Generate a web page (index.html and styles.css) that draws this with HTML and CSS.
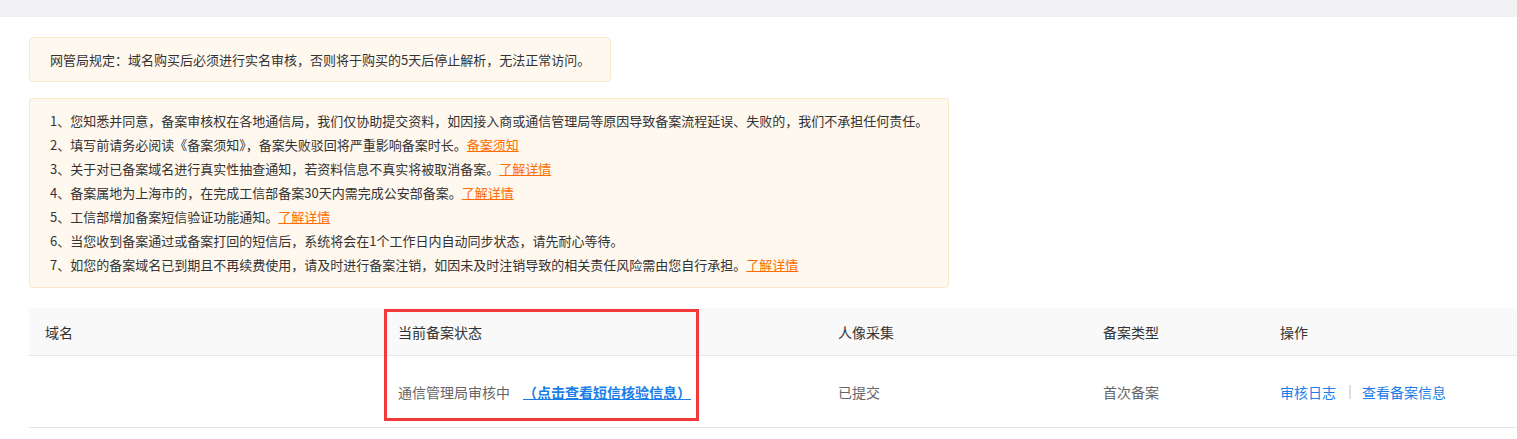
FILE: index.html
```html
<!DOCTYPE html>
<html lang="zh-CN">
<head>
  <meta charset="UTF-8" />
  <meta name="viewport" content="width=device-width, initial-scale=1.0"/>
  <title>备案管理</title>
  <link rel="stylesheet" href="styles.css">
</head>
<body>
  <div class="top-bar"></div>

  <div class="page">
    <div class="notice notice-rule">网管局规定：域名购买后必须进行实名审核，否则将于购买的5天后停止解析，无法正常访问。</div>

    <div class="notice notice-list">
      <p>1、您知悉并同意，备案审核权在各地通信局，我们仅协助提交资料，如因接入商或通信管理局等原因导致备案流程延误、失败的，我们不承担任何责任。</p>
      <p>2、填写前请务必阅读《备案须知》，备案失败驳回将严重影响备案时长。<a href="#" class="more-link">备案须知</a></p>
      <p>3、关于对已备案域名进行真实性抽查通知，若资料信息不真实将被取消备案。<a href="#" class="more-link">了解详情</a></p>
      <p>4、备案属地为上海市的，在完成工信部备案30天内需完成公安部备案。<a href="#" class="more-link">了解详情</a></p>
      <p>5、工信部增加备案短信验证功能通知。<a href="#" class="more-link">了解详情</a></p>
      <p>6、当您收到备案通过或备案打回的短信后，系统将会在1个工作日内自动同步状态，请先耐心等待。</p>
      <p>7、如您的备案域名已到期且不再续费使用，请及时进行备案注销，如因未及时注销导致的相关责任风险需由您自行承担。<a href="#" class="more-link">了解详情</a></p>
    </div>

    <div class="record-table">
      <div class="table-row table-head">
        <div class="cell">域名</div>
        <div class="cell">当前备案状态</div>
        <div class="cell">人像采集</div>
        <div class="cell">备案类型</div>
        <div class="cell">操作</div>
      </div>
      <div class="table-row">
        <div class="cell"></div>
        <div class="cell">通信管理局审核中<a href="#" class="sms-link">（点击查看短信核验信息）</a></div>
        <div class="cell">已提交</div>
        <div class="cell">首次备案</div>
        <div class="cell actions">
          <a href="#" class="action-link">审核日志</a>
          <span class="divider"></span>
          <a href="#" class="action-link">查看备案信息</a>
        </div>
      </div>
      <div class="highlight"></div>
    </div>
  </div>
</body>
</html>
```

FILE: styles.css
```css
:root {
  --notice-bg: #fff8ef;
  --notice-border: #fce7c9;
  --orange: #ff6c00;
  --blue: #1a7de8;
  --line: #e6e6e6;
}

* {
  margin: 0;
  padding: 0;
  box-sizing: border-box;
}

body {
  font-family: "Noto Sans CJK SC", "Liberation Sans", sans-serif;
  background: #fff;
  color: #333;
}

.top-bar {
  height: 17px;
  background: #f1f1f3;
}

.page {
  padding: 20px 0 0 29px;
}

.notice {
  background: var(--notice-bg);
  border: 1px solid var(--notice-border);
  border-radius: 4px;
  font-size: 13px;
  color: #333;
}

.notice-rule {
  width: fit-content;
  padding: 10px 20px;
  line-height: 23px;
}

.notice-list {
  width: 920px;
  margin-top: 16px;
  padding: 10px 20px;
}

.notice-list p {
  line-height: 24px;
  white-space: nowrap;
}

.more-link {
  color: var(--orange);
  text-decoration: underline;
}

.record-table {
  position: relative;
  margin-top: 20px;
}

.table-row {
  display: grid;
  grid-template-columns: 353px 440px 265px 177px 1fr;
  align-items: center;
  height: 72px;
  border-bottom: 1px solid var(--line);
  font-size: 14px;
  color: #666;
}

.table-head {
  height: 48px;
  background: #f9f9f9;
  color: #333;
}

.cell {
  padding-left: 16px;
  white-space: nowrap;
}

.sms-link {
  margin-left: 13px;
  color: var(--blue);
  font-weight: bold;
  text-decoration: underline;
}

.actions {
  display: flex;
  align-items: center;
}

.action-link {
  color: var(--blue);
  text-decoration: none;
}

.divider {
  width: 2px;
  height: 14px;
  margin: 0 11px 0 13px;
  background: #ddd;
}

/* annotation drawn over the status column */
.highlight {
  position: absolute;
  left: 355px;
  top: 1px;
  width: 315px;
  height: 112px;
  border: 3px solid #f23a3a;
  pointer-events: none;
}
```
